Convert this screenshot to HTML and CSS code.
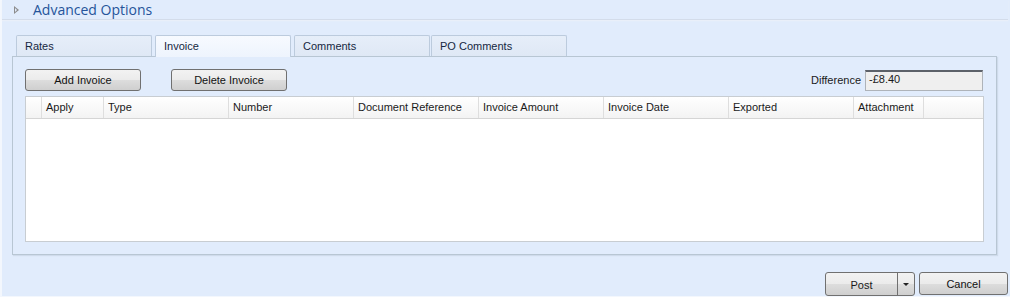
FILE: index.html
```html
<!DOCTYPE html>
<html lang="en">
<head>
  <meta charset="UTF-8">
  <title>Advanced Options</title>
  <link rel="stylesheet" href="styles.css">
</head>
<body>

  <div class="page">
    <div class="section-head">
      <span class="expander"></span>
      <span class="section-title">Advanced Options</span>
    </div>

    <div class="tabs">
      <div class="tab">Rates</div>
      <div class="tab active">Invoice</div>
      <div class="tab">Comments</div>
      <div class="tab last">PO Comments</div>
    </div>

    <div class="panel">
      <div class="toolbar">
        <button class="btn">Add Invoice</button>
        <button class="btn">Delete Invoice</button>
        <div class="spacer"></div>
        <label class="diff-label">Difference</label>
        <div class="diff-box">-£8.40</div>
      </div>

      <div class="grid">
        <div class="grid-head">
          <div class="col c-sel"></div>
          <div class="col c-apply">Apply</div>
          <div class="col c-std">Type</div>
          <div class="col c-std">Number</div>
          <div class="col c-std">Document Reference</div>
          <div class="col c-std">Invoice Amount</div>
          <div class="col c-std">Invoice Date</div>
          <div class="col c-std">Exported</div>
          <div class="col c-attach">Attachment</div>
        </div>
        <div class="grid-body"></div>
      </div>
    </div>

    <div class="actions">
      <div class="split-btn">
        <span class="split-main">Post</span>
        <span class="split-arrow"></span>
      </div>
      <button class="btn cancel">Cancel</button>
    </div>
  </div>

</body>
</html>
```

FILE: styles.css
```css
* {
  box-sizing: border-box;
}

body {
  margin: 0;
  padding: 0 0 1px 2px;
  background: #f3f7fd;
  font-family: 'Liberation Sans', Arial, sans-serif;
  font-size: 12px;
  color: #1a1a1a;
}

.page {
  height: 296px;
  background: #e1ecfc;
  padding-right: 2px;
}

.section-head {
  height: 20px;
  display: flex;
  align-items: center;
  padding-left: 12px;
  border-bottom: 1px solid #d3dcea;
  box-shadow: 0 1px 1px #e9eff9;
}

.expander {
  width: 0;
  height: 0;
  border-top: 4px solid transparent;
  border-bottom: 4px solid transparent;
  border-left: 5px solid #8c8c8c;
  position: relative;
  margin-right: 14px;
}

.expander::after {
  content: "";
  position: absolute;
  left: -4px;
  top: -2px;
  border-top: 2px solid transparent;
  border-bottom: 2px solid transparent;
  border-left: 2px solid #e1ecfc;
}

.section-title {
  font-family: 'Open Sans', 'Liberation Sans', sans-serif;
  font-size: 14px;
  color: #25549a;
  line-height: 20px;
}

.tabs {
  display: flex;
  margin-top: 15px;
  padding-left: 14px;
  height: 21px;
}

.tab {
  width: 136px;
  height: 21px;
  margin-right: 3px;
  padding: 4px 0 0 8px;
  border: 1px solid #bccbdd;
  border-bottom: none;
  border-radius: 2px 2px 0 0;
  background: linear-gradient(#e6eef9, #dfe8f5);
  color: #15273f;
  font-size: 11px;
}

.tab.active {
  height: 22px;
  background: linear-gradient(#f7faff, #eef4fd);
  position: relative;
  z-index: 1;
}

.tab:nth-child(3) {
  margin-right: 1px;
}

.panel {
  margin-left: 10px;
  width: 985px;
  height: 199px;
  border: 1px solid #b8c6d3;
  box-shadow: 1px 1px 1px #cfdbeb;
  padding: 12px 12px 0 12px;
}

.toolbar {
  display: flex;
  align-items: center;
  height: 22px;
}

.btn {
  height: 22px;
  width: 116px;
  padding: 0;
  border: 1px solid #707070;
  border-radius: 3px;
  background: linear-gradient(#f2f2f2 0%, #ebebeb 50%, #dddddd 51%, #cfcfcf 100%);
  font-family: 'Liberation Sans', Arial, sans-serif;
  font-size: 11px;
  color: #111;
}

.btn + .btn {
  margin-left: 30px;
}

.spacer {
  flex: 1;
}

.diff-label {
  font-size: 11px;
  margin-right: 4px;
}

.diff-box {
  width: 118px;
  height: 21px;
  margin-right: 1px;
  border: 1px solid #aeb3b9;
  border-top: 2px solid #5c6169;
  background: #efefef;
  padding: 1px 0 0 3px;
  font-size: 11px;
}

.grid {
  margin-top: 5px;
  height: 146px;
  border: 1px solid #c8cdd2;
  background: #fff;
}

.grid-head {
  display: flex;
  height: 22px;
  border-bottom: 1px solid #d5d5d5;
  background: linear-gradient(#ffffff, #f3f3f3);
}

.col {
  height: 21px;
  border-right: 1px solid #dedede;
  padding: 4px 0 0 4px;
  font-size: 11px;
  white-space: nowrap;
}

.c-sel {
  width: 16px;
  padding: 0;
}

.c-apply {
  width: 62px;
}

.c-std {
  width: 125px;
}

.c-attach {
  width: 70px;
}

.actions {
  display: flex;
  justify-content: flex-end;
  margin-top: 17px;
}

.split-btn {
  display: flex;
  width: 90px;
  height: 24px;
  border: 1px solid #707070;
  border-radius: 3px;
  background: linear-gradient(#f2f2f2 0%, #ebebeb 50%, #dddddd 51%, #cfcfcf 100%);
  font-size: 11px;
}

.split-main {
  flex: 1;
  border-right: 1px solid #707070;
  display: flex;
  align-items: center;
  justify-content: center;
  padding-top: 1px;
}

.split-arrow {
  width: 16px;
  display: flex;
  align-items: center;
  justify-content: center;
}

.split-arrow::before {
  content: "";
  border-left: 3px solid transparent;
  border-right: 3px solid transparent;
  border-top: 3px solid #222;
}

.btn.cancel {
  width: 89px;
  height: 23px;
  margin-left: 4px;
}
```
